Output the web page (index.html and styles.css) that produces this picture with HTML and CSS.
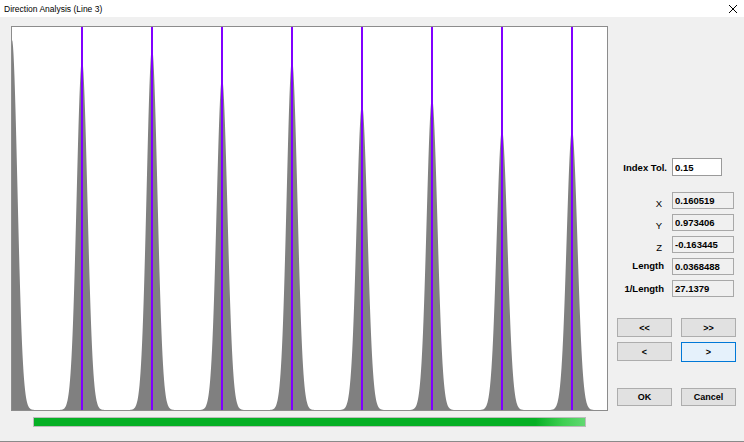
FILE: index.html
```html
<!DOCTYPE html>
<html lang="en">
<head>
    <meta charset="UTF-8">
    <title>Direction Analysis (Line 3)</title>
    <link rel="stylesheet" href="styles.css">
</head>
<body>

    <div id="window">
        <div id="titlebar">
            <span id="title">Direction Analysis (Line 3)</span>
            <svg id="close" width="10" height="10" viewBox="0 0 10 10">
                <path d="M1 1 L9 9 M9 1 L1 9" stroke="#000" stroke-width="1" fill="none"/>
            </svg>
        </div>

        <div id="dialog">
            <div id="left">
                <div id="plot-frame">
                    <svg id="plot" width="595" height="383"></svg>
                </div>
                <div id="progress"><div id="progress-fill"></div></div>
            </div>

            <div id="side">
                <div class="row index-row">
                    <span class="label">Index Tol.</span>
                    <input class="edit" type="text" value="0.15">
                </div>

                <div id="readouts">
                    <div class="row">
                        <span class="label axis">X</span>
                        <input class="edit readonly" type="text" value="0.160519" readonly>
                    </div>
                    <div class="row">
                        <span class="label axis">Y</span>
                        <input class="edit readonly" type="text" value="0.973406" readonly>
                    </div>
                    <div class="row">
                        <span class="label axis">Z</span>
                        <input class="edit readonly" type="text" value="-0.163445" readonly>
                    </div>
                    <div class="row">
                        <span class="label raised">Length</span>
                        <input class="edit readonly" type="text" value="0.0368488" readonly>
                    </div>
                    <div class="row">
                        <span class="label">1/Length</span>
                        <input class="edit readonly" type="text" value="27.1379" readonly>
                    </div>
                </div>

                <div id="nav">
                    <button>&lt;&lt;</button>
                    <button>&gt;&gt;</button>
                    <button>&lt;</button>
                    <button class="focused">&gt;</button>
                </div>

                <div id="actions">
                    <button>OK</button>
                    <button>Cancel</button>
                </div>
            </div>
        </div>
    </div>

    <script src="chart.js"></script>

</body>
</html>
```

FILE: styles.css
```css
body {
    margin: 0;
    padding: 0;
    font-family: "Liberation Sans", Arial, sans-serif;
    background-color: #f0f0f0;
}

#window {
    width: 744px;
    height: 442px;
    display: flex;
    flex-direction: column;
    box-sizing: border-box;
    border-bottom: 1px solid #8a8a8a;
}

#titlebar {
    height: 17px;
    background-color: #fff;
    display: flex;
    align-items: center;
    justify-content: space-between;
    padding: 0 6px 0 4px;
}

#title {
    font-size: 8.5px;
    color: #000;
}

#close {
    display: block;
}

#dialog {
    flex: 1;
    display: flex;
    background-color: #f0f0f0;
}

#left {
    padding: 9px 0 0 11px;
}

#plot-frame {
    width: 597px;
    height: 385px;
    box-sizing: border-box;
    border: 1px solid #8c8c8c;
    background-color: #fff;
}

#plot {
    display: block;
}

#progress {
    width: 553px;
    height: 10px;
    margin: 6px 0 0 22px;
    box-sizing: border-box;
    border: 1px solid #bcbcbc;
    background-color: #e6e6e6;
}

#progress-fill {
    height: 100%;
    background: linear-gradient(to right, #06b025 0%, #06b025 91%, #3fcf52 96%, #62d872 100%);
}

#side {
    width: 119px;
    margin-left: 9px;
    padding-top: 141px;
    font-size: 9.5px;
    font-weight: bold;
}

.row {
    display: flex;
    align-items: center;
}

.label {
    width: 47px;
    margin-right: 8px;
    text-align: right;
    color: #000;
}

.index-row .label {
    width: 50px;
    margin-right: 5px;
}

.label.axis {
    font-weight: normal;
    padding-top: 5px;
    width: 45px;
    margin-right: 10px;
}

.label.raised {
    padding-bottom: 2px;
}

.edit {
    font-family: "Liberation Sans", Arial, sans-serif;
    font-size: 9.5px;
    font-weight: bold;
    color: #000;
    box-sizing: border-box;
    width: 50px;
    height: 18px;
    margin: 0;
    padding: 0 0 0 2px;
    border: 1px solid #9a9a9a;
    background-color: #fff;
    outline: none;
}

.edit.readonly {
    width: 62px;
    height: 17px;
    background-color: #f0f0f0;
    border-color: #a8a8a8;
}

#readouts {
    display: flex;
    flex-direction: column;
    gap: 5px;
    margin-top: 16px;
}

#nav,
#actions {
    display: grid;
    grid-template-columns: 55px 55px;
    column-gap: 9px;
    row-gap: 5px;
}

#nav {
    margin-top: 21px;
}

#actions {
    margin-top: 26px;
}

button {
    font-family: "Liberation Sans", Arial, sans-serif;
    font-size: 9px;
    font-weight: bold;
    color: #000;
    height: 19px;
    margin: 0;
    padding: 0;
    box-sizing: border-box;
    background-color: #e1e1e1;
    border: 1px solid #adadad;
    border-radius: 0;
}

#actions button {
    height: 18px;
}

button.focused {
    background-color: #e5f1fb;
    border-color: #0078d7;
    height: 20px;
}
```

FILE: chart.js
```js
var svg = document.getElementById("plot");
var W = 595;
var H = 383;
var sigma = 5.4;

// centre of each peak and its height above the baseline
var peaks = [
    [0, 370], [70, 350], [140, 362], [210, 332], [280, 350],
    [350, 306], [420, 312], [490, 280], [560, 280]
];

function valueAt(x) {
    var sum = 0;
    for (var i = 0; i < peaks.length; i++) {
        var dx = x - peaks[i][0];
        sum += peaks[i][1] * Math.exp(-(dx * dx) / (2 * sigma * sigma));
    }
    return sum;
}

var d = "M0," + H;
for (var x = 0; x <= W; x += 0.5) {
    d += " L" + x + "," + (H - valueAt(x)).toFixed(2);
}
d += " L" + W + "," + H + " Z";

var ns = "http://www.w3.org/2000/svg";
var area = document.createElementNS(ns, "path");
area.setAttribute("d", d);
area.setAttribute("fill", "#808080");
svg.appendChild(area);

for (var i = 1; i < peaks.length; i++) {
    var line = document.createElementNS(ns, "rect");
    line.setAttribute("x", peaks[i][0] - 1);
    line.setAttribute("y", 0);
    line.setAttribute("width", 2);
    line.setAttribute("height", H);
    line.setAttribute("fill", "#8000ff");
    svg.appendChild(line);
}
```
